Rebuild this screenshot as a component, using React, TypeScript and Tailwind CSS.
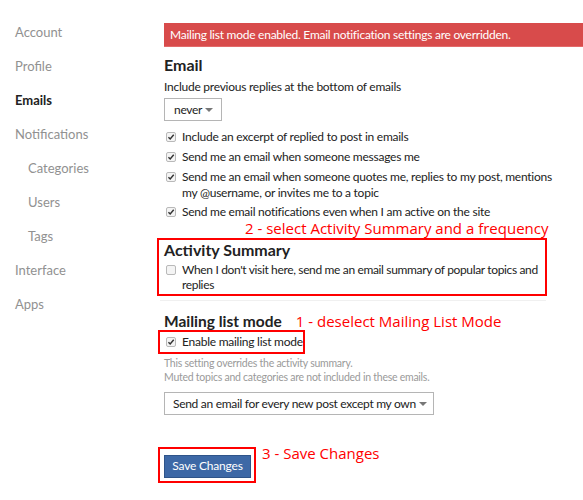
import React from 'react';

const font = { fontFamily: 'Lato, "Liberation Sans", sans-serif' } as React.CSSProperties;
const note = { fontFamily: '"Open Sans", sans-serif' } as React.CSSProperties;

const Box: React.FC<{ checked?: boolean }> = ({ checked }) => (
    <span className="mt-[3px] flex h-[10px] w-[10px] shrink-0 items-center justify-center rounded-[2px] border border-[#b9b9b9] bg-[#f4f4f4]">
        {checked && (
            <svg viewBox="0 0 10 10" className="h-[8px] w-[8px]">
                <path d="M1.8 5.2 L4 7.4 L8.4 2.2" fill="none" stroke="#333" strokeWidth="1.8" />
            </svg>
        )}
    </span>
);

const Row: React.FC<{ checked?: boolean; children: React.ReactNode; className?: string }> = ({ checked, children, className }) => (
    <label className={`flex gap-[6px] pl-[2px] text-[12px] leading-[16px] tracking-[-0.25px] text-[#222] ${className ?? ''}`}>
        <Box checked={checked} />
        <span>{children}</span>
    </label>
);

const Caret = () => <span className="ml-auto inline-block border-x-[4px] border-t-[4px] border-x-transparent border-t-[#777]" />;

const sideItems = [
    { label: 'Account' },
    { label: 'Profile' },
    { label: 'Emails', active: true },
    { label: 'Notifications' },
    { label: 'Categories', sub: true },
    { label: 'Users', sub: true },
    { label: 'Tags', sub: true },
    { label: 'Interface' },
    { label: 'Apps' },
];

const App: React.FC = () => {
    return (
        <div className="flex h-[500px] w-[583px] overflow-hidden bg-white" style={font}>
            {/* sidebar */}
            <nav className="w-[164px] shrink-0 pt-[15px]">
                {sideItems.map((item) => (
                    <div
                        key={item.label}
                        className={`h-[34px] text-[13px] leading-[34px] ${item.sub ? 'pl-[28px]' : 'pl-[15px]'} ${
                            item.active ? 'font-bold text-[#222]' : 'text-[#919191]'
                        }`}
                    >
                        {item.label}
                    </div>
                ))}
            </nav>

            {/* main */}
            <main className="min-w-0 flex-1 pt-[23px]">
                <div className="h-[24px] border-b border-[#e36a6a] bg-[#d84b4b] pl-[6px] text-[12px] leading-[24px] tracking-[-0.25px] whitespace-nowrap text-white">
                    Mailing list mode enabled. Email notification settings are overridden.
                </div>

                <h3 className="mt-[8px] text-[16px] leading-[20px] font-bold text-[#222]">Email</h3>
                <p className="mt-[4px] text-[12px] leading-[16px] tracking-[-0.25px] text-[#222]">Include previous replies at the bottom of emails</p>
                <div className="mt-[3px] flex h-[23px] w-[58px] items-center border border-[#b5b5b5] pr-[8px] pl-[9px] text-[12px] tracking-[-0.3px] text-[#222]">
                    never
                    <Caret />
                </div>

                <Row checked className="mt-[8px]">Include an excerpt of replied to post in emails</Row>
                <Row checked className="mt-[4px]">Send me an email when someone messages me</Row>
                <Row checked className="mt-[4px] pr-[30px]">
                    Send me an email when someone quotes me, replies to my post, mentions my @username, or invites me to a topic
                </Row>
                <Row checked className="mt-[3px]">Send me email notifications even when I am active on the site</Row>

                <div className="mt-[1px] ml-[81px] text-[15px] leading-[14px] whitespace-nowrap text-[#ff0000]" style={note}>
                    2 - select Activity Summary and a frequency
                </div>

                <section className="mt-[3px] ml-[-7px] w-[390px] border-2 border-[#ff0000] pb-[2px] pl-[5px]">
                    <h3 className="text-[16px] leading-[19px] font-bold text-[#222]">Activity Summary</h3>
                    <label className="mt-[3px] flex gap-[6px] pl-[2px] text-[12px] leading-[15px] tracking-[-0.35px] text-[#222]">
                        <Box />
                        <span>When I don't visit here, send me an email summary of popular topics and replies</span>
                    </label>
                </section>

                <div className="mt-[4px] ml-[-4px] h-px w-[386px] bg-[#f0f0f0]" />

                <div className="mt-[11px] flex items-center gap-[14px]">
                    <h3 className="text-[15.5px] leading-[18px] font-bold text-[#222]">Mailing list mode</h3>
                    <span className="text-[15px] leading-[18px] text-[#ff0000]" style={note}>
                        1 - deselect Mailing List Mode
                    </span>
                </div>

                <div className="ml-[-6px] w-[147px] border-2 border-[#ff0000] py-[2px] pl-[4px]">
                    <Row checked className="whitespace-nowrap">Enable mailing list mode</Row>
                </div>

                <p className="mt-[2px] text-[10.5px] leading-[14px] tracking-[-0.25px] text-[#9a9a9a]">
                    This setting overrides the activity summary.
                    <br />
                    Muted topics and categories are not included in these emails.
                </p>

                <div className="mt-[8px] flex h-[23px] w-[270px] items-center border border-[#b5b5b5] pr-[6px] pl-[8px] text-[12px] tracking-[-0.3px] whitespace-nowrap text-[#222]">
                    Send an email for every new post except my own
                    <Caret />
                </div>

                <div className="mt-[32px] flex items-start gap-[6px]">
                    <div className="ml-[-6px] border-2 border-[#ff0000] pt-[3px] pr-[3px] pb-[3px] pl-[4px]">
                        <button className="h-[23px] w-[87px] border border-[#2f5489] bg-[#3d68a6] text-[12px] tracking-[-0.2px] text-white">Save Changes</button>
                    </div>
                    <span className="mt-[-3px] text-[15px] leading-[18px] text-[#ff0000]" style={note}>
                        3 - Save Changes
                    </span>
                </div>
            </main>
        </div>
    );
};

export default App;
